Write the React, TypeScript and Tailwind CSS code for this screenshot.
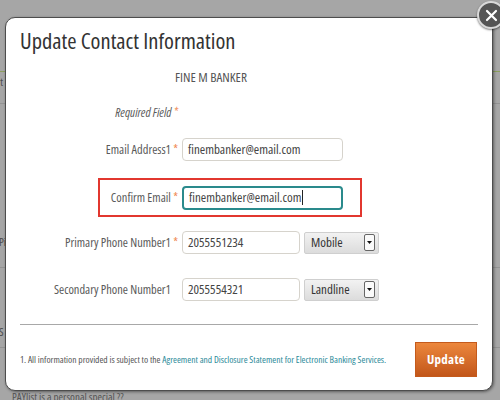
const LABEL = "text-[12.4px] leading-[15px] text-[#5a5a5a]";
const STAR = "text-[#f08a55]";

function TextBox({ value, width, caret }: { value: string; width: number; caret?: boolean }) {
  return (
    <div
      className={`flex items-center rounded-[4px] px-[5px] text-[13px] text-[#444] ${
        caret ? "h-[24px] border-2 border-[#2a8a8c]" : "h-[23px] border border-[#d6d3cc]"
      }`}
      style={{ width }}
    >
      <span>{value}</span>
      {caret && <span className="ml-[1px] h-[15px] w-px bg-[#222]" />}
    </div>
  );
}

function Select({ value }: { value: string }) {
  return (
    <div className="flex h-[22px] w-[75px] items-center justify-between rounded-[2px] border border-[#cfcfcf] bg-gradient-to-b from-[#f2f2f2] to-[#dcdcdc] pl-[6px] pr-[3px] text-[13px] text-[#333]">
      <span>{value}</span>
      <span className="flex h-[17px] w-[11px] items-center justify-center rounded-[2px] border border-[#666] bg-[#fafafa]">
        <svg width="5" height="3" viewBox="0 0 5 3">
          <path d="M0 0h5L2.5 3z" fill="#111" />
        </svg>
      </span>
    </div>
  );
}

function Row({ label, required, children }: { label: string; required?: boolean; children: React.ReactNode }) {
  return (
    <div className="flex items-center gap-[4px]">
      <div className={`w-[158px] whitespace-nowrap text-right ${LABEL}`}>
        {label}
        <span className={required ? STAR : "invisible"}> *</span>
      </div>
      {children}
    </div>
  );
}

// faint page that sits under the modal overlay
function BackgroundPage() {
  return (
    <div className="flex flex-col text-[#4a4a4a]">
      <div className="h-[72px] border-b border-[#8c9f5e] pt-[42px] text-[22px] font-bold leading-[24px]">
        <span className="-ml-[8px]">r</span>
      </div>
      <div className="h-[32px] border-b border-[#939393] pt-[2px] text-[11px]">
        <span className="-ml-[3px]">rt</span>
      </div>
      <div className="h-[164px] border-b border-[#939393] pt-[130px] text-[11px]">
        <span className="-ml-[1px]">Pi</span>
      </div>
      <div className="h-[80px] border-b border-[#939393] pt-[56px] text-[11px]">
        <span className="-ml-[1px]">S</span>
      </div>
      <div className="pl-[12px] pt-[42px] text-[11px] leading-[14px] text-[#555]">PAYlist is a personal special ??</div>
    </div>
  );
}

export default function App() {
  return (
    <div className="relative h-[400px] w-[500px] overflow-hidden bg-[#a6a6a6] font-['Open_Sans',sans-serif] [font-stretch:75%]">
      <BackgroundPage />

      <div className="absolute left-[5px] top-[17px] flex h-[374px] w-[488px] flex-col rounded-[10px] border border-[#4d4d4d] bg-white px-[14px] pt-[9px] shadow-[1px_1px_3px_rgba(0,0,0,0.45)]">
        <h1 className="text-[22.5px] leading-[28px] text-[#333]">Update Contact Information</h1>

        <div className="mt-[15px] pl-[155px] text-[13.3px] leading-[15px] text-[#555]">FINE M BANKER</div>

        <div className={`mt-[20px] w-[158px] text-right italic ${LABEL}`}>
          Required Field<span className={STAR}> *</span>
        </div>

        <div className="mt-[18px]">
          <Row label="Email Address1" required>
            <TextBox value="finembanker@email.com" width={161} />
          </Row>
        </div>

        <div className="ml-[78px] mt-[17px] flex h-[39px] w-[264px] items-center gap-[4px] border-2 border-[#e2372f]">
          <div className={`w-[78px] shrink-0 whitespace-nowrap text-right ${LABEL}`}>
            Confirm Email<span className={STAR}> *</span>
          </div>
          <TextBox value="finembanker@email.com" width={161} caret />
        </div>

        <div className="mt-[14px]">
          <Row label="Primary Phone Number1" required>
            <TextBox value="2055551234" width={118} />
            <Select value="Mobile" />
          </Row>
        </div>

        <div className="mt-[24px]">
          <Row label="Secondary Phone Number1">
            <TextBox value="2055554321" width={118} />
            <Select value="Landline" />
          </Row>
        </div>

        <div className="mt-[23px] h-px bg-[#a8a8a8]" />

        <div className="mt-[17px] flex items-center justify-between">
          <p className="whitespace-nowrap text-[9.5px] leading-[11px] text-[#555]">
            1. All information provided is subject to the{" "}
            <span className="text-[#2b8a99]">Agreement and Disclosure Statement for Electronic Banking Services.</span>
          </p>
          <button
            type="button"
            className="mr-[1px] h-[35px] w-[62px] shrink-0 border border-[#c45a1c] bg-gradient-to-b from-[#ec873c] to-[#c2561a] text-[13px] font-bold tracking-[0.3px] text-white"
          >
            Update
          </button>
        </div>
      </div>

      <button
        type="button"
        aria-label="Close"
        className="absolute left-[477px] top-[1px] flex h-[28px] w-[28px] items-center justify-center rounded-full border-2 border-[#d9d9d9] bg-[#555] shadow-[0_1px_2px_rgba(0,0,0,0.5)]"
      >
        <svg width="13" height="13" viewBox="0 0 13 13">
          <path d="M2 2l9 9M11 2l-9 9" stroke="#fff" strokeWidth="2.2" strokeLinecap="round" />
        </svg>
      </button>
    </div>
  );
}
